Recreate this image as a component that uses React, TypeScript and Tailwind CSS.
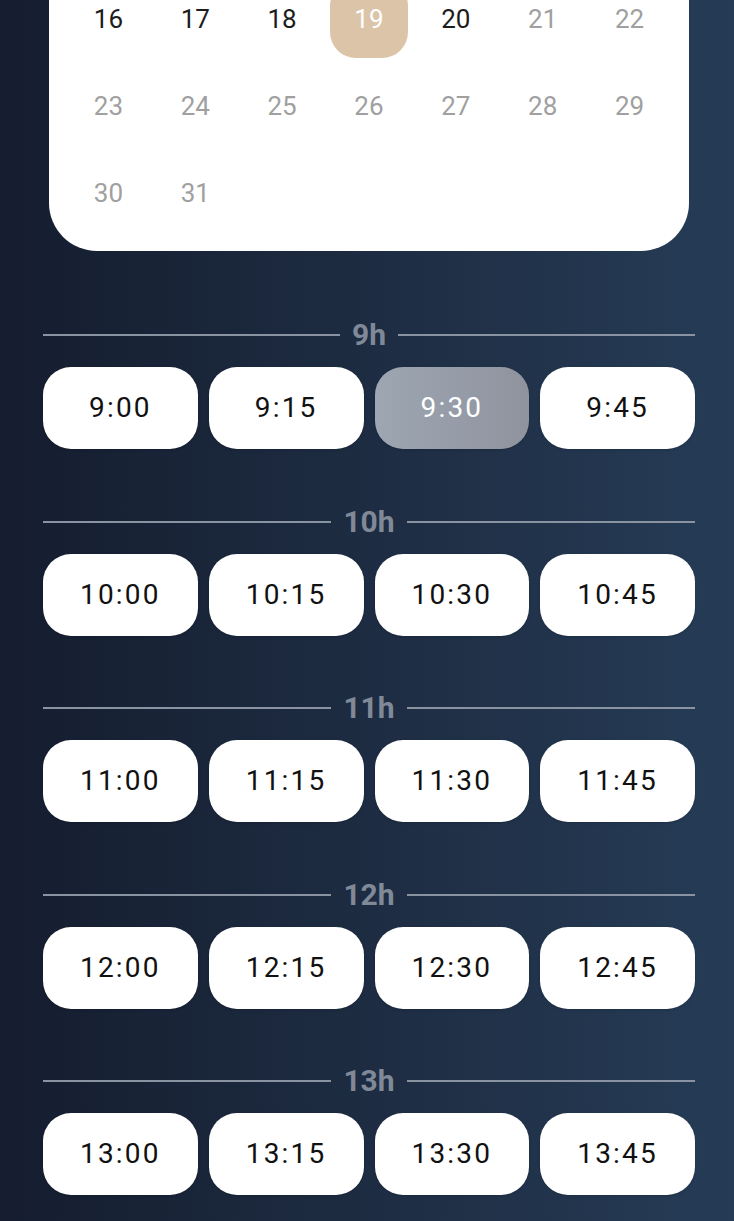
const WEEKS: number[][] = [
  [16, 17, 18, 19, 20, 21, 22],
  [23, 24, 25, 26, 27, 28, 29],
  [30, 31],
]

const SELECTED_DAY = 19
const LAST_OPEN_DAY = 20

const HOURS = [9, 10, 11, 12, 13]
const MINUTES = ['00', '15', '30', '45']
const SELECTED_SLOT = '9:30'

function DayCell({ day }: { day: number }) {
  const selected = day === SELECTED_DAY
  const open = day <= LAST_OPEN_DAY
  return (
    <div className="flex justify-center">
      <div
        className={`flex h-[78px] w-[78px] items-center justify-center rounded-[26px] text-[26px] ${
          selected ? 'bg-[#dcc4a9] text-white' : open ? 'text-[#1c1c1c]' : 'text-[#a0a0a0]'
        }`}
      >
        {day}
      </div>
    </div>
  )
}

function HourHeader({ hour }: { hour: number }) {
  return (
    <div className="flex h-[36px] items-center gap-3">
      <div className="h-[2px] flex-1 bg-[#8a93a1]" />
      <span className="text-[30px] font-bold leading-[36px] text-[#808998]">{hour}h</span>
      <div className="h-[2px] flex-1 bg-[#8a93a1]" />
    </div>
  )
}

function Slot({ label }: { label: string }) {
  const selected = label === SELECTED_SLOT
  return (
    <button
      className={`flex h-[82px] items-center justify-center rounded-[28px] text-[28px] tracking-[2.2px] shadow-sm ${
        selected ? 'bg-linear-to-r from-[#9da6b2] to-[#8f939e] text-white' : 'bg-white text-[#111111]'
      }`}
    >
      {label}
    </button>
  )
}

export default function App() {
  return (
    <div
      className="min-h-[1221px] w-full overflow-hidden bg-linear-to-r from-[#151d2f] to-[#263c56] pb-10"
      style={{ fontFamily: 'Roboto, "Noto Sans", sans-serif' }}
    >
      <div className="ml-[49px] mt-[-24px] w-[640px] rounded-b-[48px] bg-white px-4 pb-[19px] pt-[4px]">
        <div className="grid grid-cols-7 gap-y-[9px]">
          {WEEKS.flat().map((d) => (
            <DayCell key={d} day={d} />
          ))}
        </div>
      </div>

      <div className="mt-[66px] flex flex-col gap-[54.5px] pl-[43px] pr-[39px]">
        {HOURS.map((h) => (
          <div key={h} className="flex flex-col gap-[14px]">
            <HourHeader hour={h} />
            <div className="grid grid-cols-4 gap-[11px]">
              {MINUTES.map((m) => (
                <Slot key={m} label={`${h}:${m}`} />
              ))}
            </div>
          </div>
        ))}
      </div>
    </div>
  )
}
